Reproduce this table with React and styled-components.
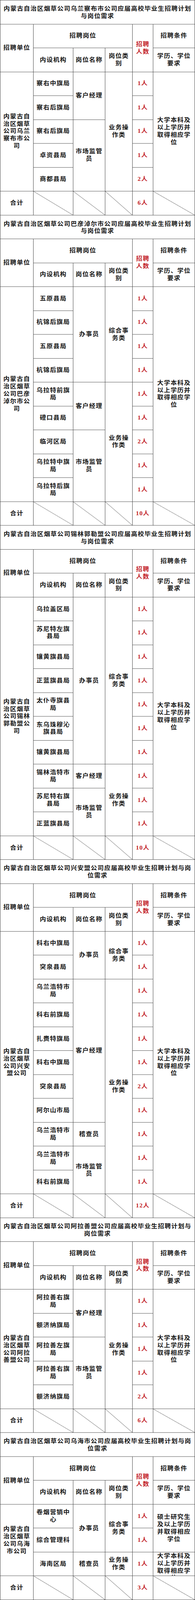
import React from 'react'
import styled, { createGlobalStyle, css } from 'styled-components'

const GlobalStyle = createGlobalStyle`
  html, body {
    margin: 0;
    padding: 0;
    background: #fff;
    overflow: hidden;
  }
  body {
    font-family: "Liberation Serif", "Noto Sans CJK SC", serif;
  }
`

const LINE = '#444'
const RED = '#c3242a'
const PAGE_H = 4524

const REQ = '大学本科及以上学历并取得相应学位'
const REQ_MASTER = '硕士研究生及以上学历并取得相应学位'

const sections = [
  {
    title: '内蒙古自治区烟草公司乌兰察布市公司应届高校毕业生招聘计划与岗位需求',
    unit: '内蒙古自治区烟草公司乌兰察布市公司',
    total: '6人',
    rows: [
      { org: '察右中旗局', post: ['客户经理', 2], cat: ['业务操作类', 5], n: '1人', req: [REQ, 5] },
      { org: '察右后旗局', n: '1人' },
      { org: '察右后旗局', post: ['市场监管员', 3], n: '1人' },
      { org: '卓资县局', n: '1人' },
      { org: '商都县局', n: '2人' },
    ],
  },
  {
    title: '内蒙古自治区烟草公司巴彦淖尔市公司应届高校毕业生招聘计划与岗位需求',
    unit: '内蒙古自治区烟草公司巴彦淖尔市公司',
    total: '10人',
    rows: [
      { org: '五原县局', post: ['办事员', 4], cat: ['综合事务类', 4], n: '1人', req: [REQ, 9] },
      { org: '杭锦后旗局', n: '1人' },
      { org: '五原县局', n: '1人' },
      { org: '杭锦后旗局', n: '1人' },
      { org: '乌拉特前旗局', post: ['客户经理', 2], cat: ['业务操作类', 5], n: '1人' },
      { org: '磴口县局', n: '1人' },
      { org: '临河区局', post: ['市场监管员', 3], n: '2人' },
      { org: '乌拉特中旗局', n: '1人' },
      { org: '乌拉特后旗局', n: '1人' },
    ],
  },
  {
    title: '内蒙古自治区烟草公司锡林郭勒盟公司应届高校毕业生招聘计划与岗位需求',
    unit: '内蒙古自治区烟草公司锡林郭勒盟公司',
    total: '10人',
    rows: [
      { org: '乌拉盖区局', post: ['办事员', 7], cat: ['综合事务类', 7], n: '1人', req: [REQ, 10] },
      { org: '苏尼特左旗县局', n: '1人' },
      { org: '镶黄旗县局', n: '1人' },
      { org: '正蓝旗县局', n: '1人' },
      { org: '太仆寺旗县局', n: '1人' },
      { org: '东乌珠穆沁旗县局', n: '1人' },
      { org: '镶黄旗县局', n: '1人' },
      { org: '锡林浩特市局', post: ['客户经理', 1], cat: ['业务操作类', 3], n: '1人' },
      { org: '苏尼特右旗县局', post: ['市场监管员', 2], n: '1人' },
      { org: '正蓝旗县局', n: '1人' },
    ],
  },
  {
    title: '内蒙古自治区烟草公司兴安盟公司应届高校毕业生招聘计划与岗位需求',
    unit: '内蒙古自治区烟草公司兴安盟公司',
    total: '12人',
    rows: [
      { org: '科右中旗局', post: ['办事员', 2], cat: ['综合事务类', 2], n: '1人', req: [REQ, 11] },
      { org: '突泉县局', n: '1人' },
      { org: '乌兰浩特市局', post: ['客户经理', 6], cat: ['业务操作类', 9], n: '1人' },
      { org: '科右前旗局', n: '1人' },
      { org: '扎赉特旗局', n: '1人' },
      { org: '科右中旗局', n: '1人' },
      { org: '突泉县局', n: '2人' },
      { org: '阿尔山市局', n: '1人' },
      { org: '乌兰浩特市局', post: ['稽查员', 1], n: '1人' },
      { org: '乌兰浩特市局', post: ['市场监管员', 2], n: '1人' },
      { org: '科右前旗局', n: '1人' },
    ],
  },
  {
    title: '内蒙古自治区烟草公司阿拉善盟公司应届高校毕业生招聘计划与岗位需求',
    unit: '内蒙古自治区烟草公司阿拉善盟公司',
    total: '6人',
    rows: [
      { org: '阿拉善右旗局', post: ['客户经理', 2], cat: ['业务操作类', 5], n: '1人', req: [REQ, 5] },
      { org: '额济纳旗局', n: '1人' },
      { org: '阿拉善左旗局', post: ['市场监管员', 3], n: '1人' },
      { org: '阿拉善右旗局', n: '1人' },
      { org: '额济纳旗局', n: '2人' },
    ],
  },
  {
    title: '内蒙古自治区烟草公司乌海市公司应届高校毕业生招聘计划与岗位需求',
    unit: '内蒙古自治区烟草公司乌海市公司',
    total: '3人',
    rows: [
      { org: '卷烟营销中心', post: ['办事员', 2], cat: ['综合事务类', 2], n: '1人', req: [REQ_MASTER, 2] },
      { org: '综合管理科', n: '1人' },
      { org: '海南区局', post: ['稽查员', 1], cat: ['业务操作类', 1], n: '1人', req: [REQ, 1, true] },
    ],
  },
]

// title + 2 header rows + data rows + total row
const totalRows = sections.reduce((sum, s) => sum + s.rows.length + 4, 0)

// the window can be shorter than the sheet: the sheet is squeezed to fit it
const Viewport = styled.div`
  width: 500px;
  overflow: hidden;
`

const Frame = styled.div`
  width: 500px;
  transform-origin: top left;
`

const Sheet = styled.div`
  display: grid;
  box-sizing: border-box;
  width: 500px;
  height: ${PAGE_H}px;
  padding: 1px;
  gap: 1px;
  background: ${LINE};
  grid-template-columns: 84px 101px 81px 69px 52px 106px;
  grid-template-rows: repeat(${p => p.$rows}, 1fr);
  color: #161616;
  font-size: 16px;
  font-weight: 700;
  letter-spacing: 1.2px;
  line-height: 20.8px;
`

const Cell = styled.div`
  grid-row: span ${p => p.$rows || 1};
  grid-column: span ${p => p.$cols || 1};
  display: flex;
  align-items: center;
  justify-content: center;
  min-width: 0;
  min-height: 0;
  padding: 0 4px;
  text-align: center;
  background: #fff;
  color: ${p => (p.$red ? RED : 'inherit')};
  ${p =>
    p.$slash &&
    css`
      background: linear-gradient(
          to top right,
          transparent calc(50% - 0.7px),
          ${LINE} 50%,
          transparent calc(50% + 0.7px)
        ),
        #fff;
    `}
  ${p =>
    p.$clip &&
    css`
      align-items: flex-start;
      overflow: hidden;
      padding-top: 1px;
    `}
`

const Title = styled(Cell)`
  padding: 3px 6px 0;
`

function Section({ s }) {
  return (
    <>
      <Title $cols={6}>{s.title}</Title>

      <Cell $rows={2}>招聘单位</Cell>
      <Cell $cols={3}>招聘岗位</Cell>
      <Cell $rows={2} $red>招聘人数</Cell>
      <Cell>招聘条件</Cell>
      <Cell>内设机构</Cell>
      <Cell>岗位名称</Cell>
      <Cell>岗位类别</Cell>
      <Cell>学历、学位要求</Cell>

      {s.rows.map((r, i) => (
        <React.Fragment key={i}>
          {i === 0 && <Cell $rows={s.rows.length}>{s.unit}</Cell>}
          <Cell>{r.org}</Cell>
          {r.post && <Cell $rows={r.post[1]}>{r.post[0]}</Cell>}
          {r.cat && <Cell $rows={r.cat[1]}>{r.cat[0]}</Cell>}
          <Cell $red>{r.n}</Cell>
          {r.req && (
            <Cell $rows={r.req[1]} $clip={r.req[2]}>
              {r.req[0]}
            </Cell>
          )}
        </React.Fragment>
      ))}

      <Cell>合计</Cell>
      <Cell $slash />
      <Cell $slash />
      <Cell $slash />
      <Cell $red>{s.total}</Cell>
      <Cell $slash />
    </>
  )
}

export default function App() {
  const fit = typeof window !== 'undefined' ? Math.min(1, window.innerHeight / PAGE_H) : 1
  return (
    <>
      <GlobalStyle />
      <Viewport style={{ height: PAGE_H * fit }}>
        <Frame style={{ transform: `scaleY(${fit})` }}>
          <Sheet $rows={totalRows}>
            {sections.map((s, i) => (
              <Section key={i} s={s} />
            ))}
          </Sheet>
        </Frame>
      </Viewport>
    </>
  )
}
